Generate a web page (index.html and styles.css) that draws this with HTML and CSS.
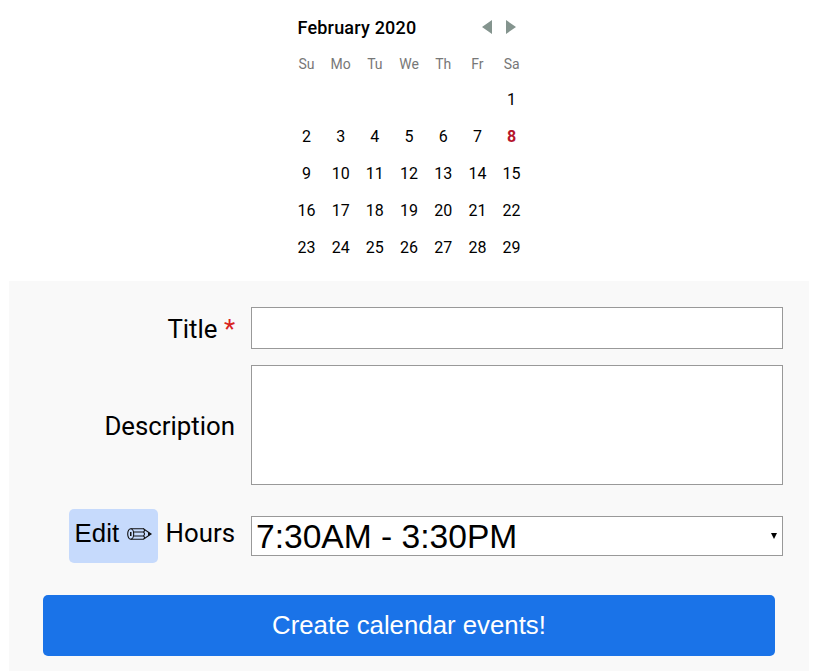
FILE: index.html
```html
<!DOCTYPE html>
<html lang="en">
<head>
<meta charset="utf-8">
<title>Create calendar events</title>
<link rel="stylesheet" href="styles.css">
</head>
<body>
<section class="calendar">
  <header class="cal-head">
    <span class="month">February 2020</span>
    <svg class="arrows" width="36" height="14" viewBox="0 0 36 14"><path d="M11 0v14L1 7zM25 0v14l10-7z"/></svg>
  </header>
  <div class="grid weekdays"><span>Su</span><span>Mo</span><span>Tu</span><span>We</span><span>Th</span><span>Fr</span><span>Sa</span></div>
  <div class="grid days">
    <span class="first">1</span>
    <span>2</span><span>3</span><span>4</span><span>5</span><span>6</span><span>7</span><span class="today">8</span>
    <span>9</span><span>10</span><span>11</span><span>12</span><span>13</span><span>14</span><span>15</span>
    <span>16</span><span>17</span><span>18</span><span>19</span><span>20</span><span>21</span><span>22</span>
    <span>23</span><span>24</span><span>25</span><span>26</span><span>27</span><span>28</span><span>29</span>
  </div>
</section>
<main class="form">
  <div class="row title-row"><label class="label">Title <span class="required">*</span></label><div class="field"></div></div>
  <div class="row desc-row"><label class="label">Description</label><div class="field"></div></div>
  <div class="row hours-row">
    <div class="label"><button class="edit">Edit <svg class="pencil" width="25" height="14" viewBox="0 0 25 14"><ellipse cx="3.7" cy="7" rx="3" ry="5.2"/><path d="M3.7 1.8h12.8L24 7l-7.5 5.2H3.7M6.5 5h10M6.5 9h10M16.5 1.8q2 1.6 0 3.2 2 2 0 4 2 1.6 0 3.2"/><path class="lead" d="M21 5l3.5 2L21 9zM3 5h1.5v4H3z"/></svg></button><span>Hours</span></div>
    <div class="field select"><span>7:30AM - 3:30PM</span><svg width="6" height="6" viewBox="0 0 6 6"><path d="M0 0h6L3 6z"/></svg></div>
  </div>
  <button class="submit">Create calendar events!</button>
</main>
</body>
</html>
```
FILE: styles.css
```css
* { box-sizing: border-box; }
body { margin: 0; height: 671px; overflow: hidden; background: #fff; color: #000; font-family: Roboto, sans-serif; }
.calendar { width: 240px; height: 281px; margin-left: 289px; padding-top: 10px; }
.cal-head { display: flex; justify-content: space-between; align-items: center; height: 36px; padding: 0 12px 0 8.5px; }
.month { font-size: 18px; font-weight: 500; letter-spacing: .2px; padding-bottom: 2px; }
.arrows { fill: #84948e; margin-bottom: 2px; }
.grid { display: grid; grid-template-columns: repeat(7, 34.2px); margin-left: .4px; text-align: center; }
.weekdays { height: 35px; line-height: 36px; font-size: 14px; color: #777; }
.days { grid-auto-rows: 37px; line-height: 37px; font-size: 16px; }
.first { grid-column: 7; }
.today { color: #b5142b; font-weight: 700; }
.form { width: 800px; height: 390px; margin-left: 9px; padding: 26px 26px 0 0; background: #f9f9f9; }
.row { display: grid; grid-template-columns: 226px 532px; column-gap: 16px; align-items: center; }
.label { text-align: right; font-size: 25.8px; line-height: 32px; padding-top: 2px; }
.required { color: #d8241f; }
.field { background: #fff; border: 1px solid #999; height: 100%; }
.title-row { height: 42px; }
.desc-row { height: 120px; margin-top: 16px; }
.hours-row { height: 54px; margin-top: 24px; }
.hours-row .label { display: flex; align-items: center; justify-content: flex-end; gap: 8px; padding-top: 0; }
.hours-row .label > span { position: relative; top: -3px; }
.edit { width: 89px; height: 54px; padding: 0 6px 5px; border: 0; border-radius: 5px; background: #c6dafc; color: #000; font: 25.8px "Liberation Sans", sans-serif; display: flex; align-items: center; justify-content: space-between; }
.pencil { fill: none; stroke: #111; stroke-width: 1.1; }
.pencil .lead { fill: #111; stroke: none; }
.select { height: 40px; display: flex; align-items: center; justify-content: space-between; padding: 0 5px 0 4px; font: 33.6px "Liberation Sans", sans-serif; }
.select span { padding-top: 2px; }
.submit { display: block; width: 732px; height: 61px; margin: 32px 0 0 34px; padding: 0; border: 0; border-radius: 5px; background: #1a73e8; color: #fff; font: 25.8px "Liberation Sans", sans-serif; }
```
